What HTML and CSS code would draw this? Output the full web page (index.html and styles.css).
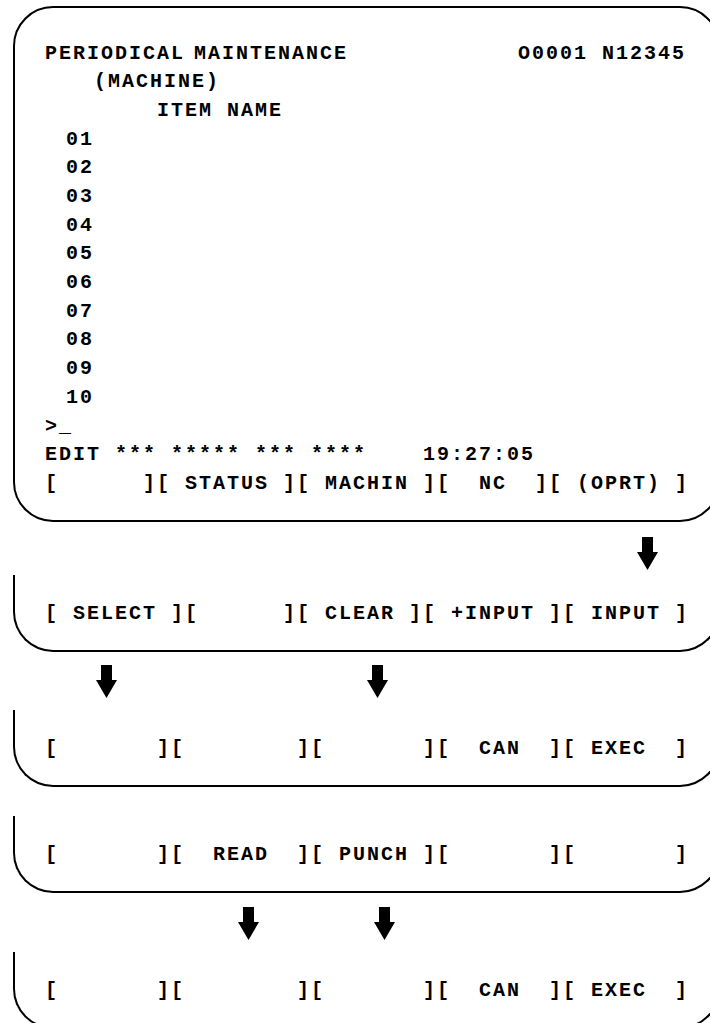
FILE: index.html
```html
<!DOCTYPE html>
<html lang="en">
<head>
  <meta charset="UTF-8" />
  <title>Periodical Maintenance (Machine)</title>
  <link rel="stylesheet" href="styles.css">
</head>
<body>
  <svg width="0" height="0" class="defs">
    <symbol id="down" viewBox="0 0 21 33">
      <rect x="5" y="0" width="11" height="16" />
      <polygon points="0,15 21,15 10.5,33" />
    </symbol>
  </svg>

  <div class="panel screen">
    <div class="line head"><span class="title">PERIODICAL MAINTENANCE</span><span>O0001 N12345</span></div>
    <div class="line machine">(MACHINE)</div>
    <div class="line item-name">ITEM NAME</div>
    <div class="line item">01</div>
    <div class="line item">02</div>
    <div class="line item">03</div>
    <div class="line item">04</div>
    <div class="line item">05</div>
    <div class="line item">06</div>
    <div class="line item">07</div>
    <div class="line item">08</div>
    <div class="line item">09</div>
    <div class="line item">10</div>
    <div class="line">&gt;_</div>
    <div class="line">EDIT *** ***** *** ****    19:27:05</div>
    <div class="line">[      ][ STATUS ][ MACHIN ][  NC  ][ (OPRT) ]</div>
  </div>

  <div class="arrows row-1">
    <svg class="arrow a-oprt"><use href="#down" /></svg>
  </div>

  <div class="panel keys">
    <div class="line">[ SELECT ][      ][ CLEAR ][ +INPUT ][ INPUT ]</div>
  </div>

  <div class="arrows row-2">
    <svg class="arrow a-select"><use href="#down" /></svg>
    <svg class="arrow a-clear"><use href="#down" /></svg>
  </div>

  <div class="panel keys">
    <div class="line">[       ][        ][       ][  CAN  ][ EXEC  ]</div>
  </div>

  <div class="panel keys gap-top">
    <div class="line">[       ][  READ  ][ PUNCH ][       ][       ]</div>
  </div>

  <div class="arrows row-3">
    <svg class="arrow a-read"><use href="#down" /></svg>
    <svg class="arrow a-punch"><use href="#down" /></svg>
  </div>

  <div class="panel keys">
    <div class="line">[       ][        ][       ][  CAN  ][ EXEC  ]</div>
  </div>
</body>
</html>
```

FILE: styles.css
```css
html, body {
  margin: 0;
  overflow: hidden;
  background: #fff;
}
body {
  font-family: "Liberation Mono", "Courier New", monospace;
  font-weight: bold;
  font-size: 20px;
  letter-spacing: 2px;
  color: #000;
}
.defs {
  position: absolute;
}
.panel {
  box-sizing: border-box;
  width: 707px;
  margin-left: 13px;
  padding-left: 30px;
  border: 2px solid #000;
  border-radius: 40px;
}
.line {
  height: 28.7px;
  line-height: 28.7px;
  white-space: pre;
}
.screen {
  margin-top: 6px;
  padding-top: 31.6px;
  padding-bottom: 21.2px;
}
.head {
  display: flex;
  justify-content: space-between;
  padding-right: 32px;
}
.title {
  word-spacing: -5px;
}
.machine {
  padding-left: 49px;
}
.item-name {
  padding-left: 112px;
}
.item {
  padding-left: 21px;
}
/* soft key bars: open on top */
.keys {
  border-top: none;
  border-radius: 0 0 40px 40px;
  padding-top: 25.5px;
  padding-bottom: 20.8px;
}
.gap-top {
  margin-top: 29px;
}
.arrows {
  display: flex;
  height: 33px;
}
.row-1 {
  margin: 15px 0 5px;
}
.row-2 {
  margin: 13px 0 12px;
}
.row-3 {
  margin: 14px 0 12px;
}
.arrow {
  width: 21px;
  height: 33px;
  fill: #000;
}
.a-oprt { margin-left: 637px; }
.a-select { margin-left: 96px; }
.a-clear { margin-left: 250px; }
.a-read { margin-left: 238px; }
.a-punch { margin-left: 115px; }
```
